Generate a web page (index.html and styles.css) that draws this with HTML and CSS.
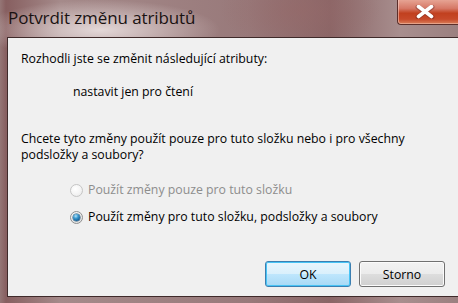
FILE: index.html
```html
<!DOCTYPE html>
<html lang="cs">
<head>
<meta charset="utf-8">
<title>Potvrdit změnu atributů</title>
<link rel="stylesheet" href="styles.css">
</head>
<body>
<div class="window">
  <div class="titlebar">
    <div class="title">Potvrdit změnu atributů</div>
    <div class="close">
      <svg width="20" height="14" viewBox="0 0 20 14" aria-hidden="true">
        <path d="M3 2 L17 12 M17 2 L3 12" stroke="#5a2020" stroke-width="5" stroke-linecap="round" opacity="0.35"/>
        <path d="M3.5 1.5 L16.5 11.5 M16.5 1.5 L3.5 11.5" stroke="#ffffff" stroke-width="3.6" stroke-linecap="round"/>
      </svg>
    </div>
  </div>
  <div class="client">
    <p class="msg">Rozhodli jste se změnit následující atributy:</p>
    <p class="attr">nastavit jen pro čtení</p>
    <p class="question">Chcete tyto změny použít pouze pro tuto složku nebo i pro všechny podsložky a soubory?</p>
    <div class="options">
      <label class="option disabled"><span class="radio"></span>Použít změny pouze pro tuto složku</label>
      <label class="option"><span class="radio checked"></span>Použít změny pro tuto složku, podsložky a soubory</label>
    </div>
    <div class="buttons">
      <button class="btn default">OK</button>
      <button class="btn">Storno</button>
    </div>
  </div>
</div>
</body>
</html>
```
FILE: styles.css
```css
html, body {
  margin: 0;
  padding: 0;
  width: 458px;
  height: 303px;
  overflow: hidden;
  background: #2d1f1f;
}
.window {
  width: 458px;
  height: 303px;
  box-sizing: border-box;
  padding-left: 7px;
  padding-bottom: 6px;
  display: flex;
  flex-direction: column;
  background:
    radial-gradient(ellipse 120px 30px at 100px 30px, rgba(235,225,225,0.9), rgba(235,225,225,0) 100%),
    radial-gradient(ellipse 80px 40px at 300px 10px, rgba(150,105,105,0.6), rgba(150,105,105,0) 100%),
    linear-gradient(90deg, #957676 0px, #875f60 6px, #a58a8a 60px, #98797a 250px, #8a6566 330px, #a88e8e 400px, #9b8080 458px);
}
.titlebar {
  height: 37px;
  display: flex;
  justify-content: space-between;
  align-items: flex-start;
}
.title {
  font-family: "Open Sans", "Noto Sans", sans-serif;
  font-size: 17px;
  color: #1a1212;
  padding-top: 6px;
  padding-left: 1px;
  letter-spacing: -0.1px;
}
.close {
  width: 61px;
  height: 25px;
  box-sizing: border-box;
  border: 1px solid #5b2e2a;
  border-top: none;
  border-right: none;
  border-bottom-left-radius: 4px;
  background: linear-gradient(180deg, #e6a393 0%, #d67866 35%, #c1401f 55%, #c7492a 80%, #d9805a 100%);
  box-shadow: inset 1px 0 0 rgba(255,220,210,0.5), inset 0 -1px 0 rgba(255,220,210,0.4);
  display: flex;
  align-items: center;
  justify-content: center;
  padding-right: 6px;
}
.client {
  flex: 1;
  background: #f0f0f0;
  border-top: 1px solid #3f2a2a;
  border-left: 1px solid #3f2a2a;
  border-bottom: 1px solid #3f2a2a;
  font-family: "Open Sans", "Noto Sans", sans-serif;
  font-size: 12.3px;
  line-height: 16px;
  color: #000;
  padding: 13px 0 0 13px;
  display: flex;
  flex-direction: column;
}
.client p {
  margin: 0;
}
.attr {
  margin-top: 17px !important;
  padding-left: 52px;
}
.question {
  margin-top: 31px !important;
  width: 415px;
}
.options {
  display: flex;
  flex-direction: column;
  gap: 11px;
  margin-top: 19px;
  padding-left: 49px;
}
.option {
  display: flex;
  align-items: center;
  gap: 5px;
}
.option.disabled {
  color: #8d8d8d;
}
.radio {
  width: 13px;
  height: 13px;
  box-sizing: border-box;
  border-radius: 50%;
  border: 1px solid #8e8f8f;
  background: radial-gradient(circle at 40% 35%, #ffffff 0%, #f4f4f4 40%, #d6d6d6 100%);
  position: relative;
}
.option.disabled .radio {
  border-color: #c5c5c5;
  background: radial-gradient(circle at 40% 35%, #ffffff 0%, #f5f5f5 50%, #e6e6e6 100%);
}
.radio.checked::after {
  content: "";
  position: absolute;
  left: 2px;
  top: 2px;
  width: 7px;
  height: 7px;
  border-radius: 50%;
  background: radial-gradient(circle at 40% 30%, #b9e3f7 0%, #3b9bd0 35%, #135c93 75%, #0b3e6b 100%);
  box-shadow: 0 0 0 0.5px #27506e;
}
.buttons {
  display: flex;
  gap: 8px;
  margin-top: 36px;
  padding-left: 244px;
}
.btn {
  width: 86px;
  height: 26px;
  box-sizing: border-box;
  border-radius: 3px;
  border: 1px solid #707070;
  background: linear-gradient(180deg, #f2f2f2 0%, #ebebeb 50%, #dddddd 51%, #cfcfcf 100%);
  box-shadow: inset 0 0 0 1px #fbfbfb;
  font-family: "Open Sans", "Noto Sans", sans-serif;
  font-size: 12.3px;
  color: #000;
  padding: 0;
}
.btn.default {
  border-color: #3c7fb1;
  background: linear-gradient(180deg, #eaf6fd 0%, #d9f0fc 50%, #bee6fd 51%, #a7d9f5 100%);
  box-shadow: inset 0 0 0 1px #48c4f5;
}
```
